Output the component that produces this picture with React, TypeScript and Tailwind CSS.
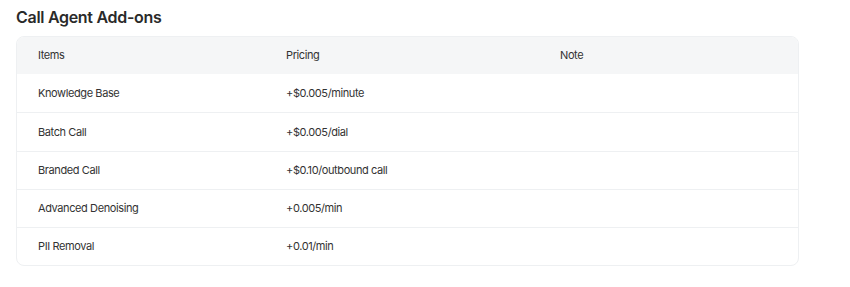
import React from "react";

const rows = [
  { item: "Knowledge Base", pricing: "+$0.005/minute", note: "" },
  { item: "Batch Call", pricing: "+$0.005/dial", note: "" },
  { item: "Branded Call", pricing: "+$0.10/outbound call", note: "" },
  { item: "Advanced Denoising", pricing: "+0.005/min", note: "" },
  { item: "PII Removal", pricing: "+0.01/min", note: "" },
];

const cols = "grid grid-cols-[248px_274px_1fr]";

export default function App() {
  return (
    <div
      className="w-[850px] h-[287px] bg-white px-4 pt-[7px]"
      style={{ fontFamily: "Inter, 'Liberation Sans', sans-serif" }}
    >
      <h2 className="text-[16px] leading-[20px] font-semibold tracking-[-0.3px] text-[#2a2a2a]">
        Call Agent Add-ons
      </h2>
      <div className="mt-[9px] w-[783px] rounded-lg border border-[#eef0f2] overflow-hidden">
        <div className={`${cols} h-[37px] items-center bg-[#f5f6f7] text-[11px] tracking-[-0.4px] text-[#333]`}>
          <div className="pl-[21px]">Items</div>
          <div className="pl-[21px]">Pricing</div>
          <div className="pl-[21px]">Note</div>
        </div>
        {rows.map((r, i) => (
          <div
            key={r.item}
            className={`${cols} ${i === rows.length - 1 ? "h-[38px]" : "h-[38.25px]"} items-center text-[11px] tracking-[-0.4px] text-[#333] ${
              i > 0 ? "border-t border-[#eef0f2]" : ""
            }`}
          >
            <div className="pl-[21px]">{r.item}</div>
            <div className="pl-[21px]">{r.pricing}</div>
            <div className="pl-[21px]">{r.note}</div>
          </div>
        ))}
      </div>
    </div>
  );
}
